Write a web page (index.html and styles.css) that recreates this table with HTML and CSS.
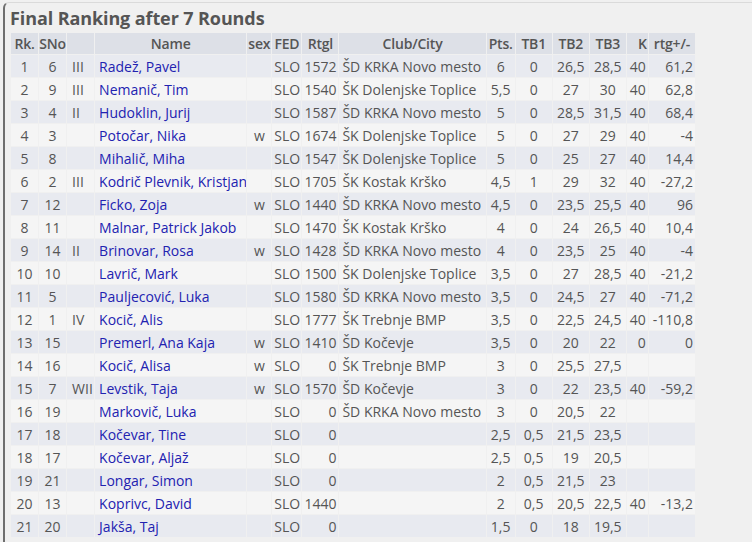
FILE: index.html
```html
<!DOCTYPE html>
<html>
<head>
<meta charset="utf-8">
<link rel="stylesheet" href="styles.css">
</head>
<body>
<div class="frame">
  <h1 class="title">Final Ranking after 7 Rounds</h1>
  <table class="rank">
    <colgroup>
      <col class="c-rk"><col class="c-sno"><col class="c-tit"><col class="c-name"><col class="c-sex"><col class="c-fed"><col class="c-rtg"><col class="c-club"><col class="c-pts"><col class="c-tb"><col class="c-tb"><col class="c-tb"><col class="c-k"><col class="c-diff">
    </colgroup>
    <thead>
      <tr><th>Rk.</th><th>SNo</th><th></th><th>Name</th><th>sex</th><th>FED</th><th>Rtgl</th><th>Club/City</th><th>Pts.</th><th>TB1</th><th>TB2</th><th>TB3</th><th class="r">K</th><th>rtg+/-</th></tr>
    </thead>
    <tbody>
      <tr><td class="c">1</td><td class="c">6</td><td class="t">III</td><td class="n">Radež, Pavel</td><td class="c"></td><td>SLO</td><td class="r">1572</td><td class="l">ŠD KRKA Novo mesto</td><td class="c">6</td><td class="c">0</td><td class="c">26,5</td><td class="c">28,5</td><td class="r">40</td><td class="r">61,2</td></tr>
      <tr><td class="c">2</td><td class="c">9</td><td class="t">III</td><td class="n">Nemanič, Tim</td><td class="c"></td><td>SLO</td><td class="r">1540</td><td class="l">ŠK Dolenjske Toplice</td><td class="c">5,5</td><td class="c">0</td><td class="c">27</td><td class="c">30</td><td class="r">40</td><td class="r">62,8</td></tr>
      <tr><td class="c">3</td><td class="c">4</td><td class="t">II</td><td class="n">Hudoklin, Jurij</td><td class="c"></td><td>SLO</td><td class="r">1587</td><td class="l">ŠD KRKA Novo mesto</td><td class="c">5</td><td class="c">0</td><td class="c">28,5</td><td class="c">31,5</td><td class="r">40</td><td class="r">68,4</td></tr>
      <tr><td class="c">4</td><td class="c">3</td><td class="t"></td><td class="n">Potočar, Nika</td><td class="c">w</td><td>SLO</td><td class="r">1674</td><td class="l">ŠK Dolenjske Toplice</td><td class="c">5</td><td class="c">0</td><td class="c">27</td><td class="c">29</td><td class="r">40</td><td class="r">-4</td></tr>
      <tr><td class="c">5</td><td class="c">8</td><td class="t"></td><td class="n">Mihalič, Miha</td><td class="c"></td><td>SLO</td><td class="r">1547</td><td class="l">ŠK Dolenjske Toplice</td><td class="c">5</td><td class="c">0</td><td class="c">25</td><td class="c">27</td><td class="r">40</td><td class="r">14,4</td></tr>
      <tr><td class="c">6</td><td class="c">2</td><td class="t">III</td><td class="n">Kodrič Plevnik, Kristjan</td><td class="c"></td><td>SLO</td><td class="r">1705</td><td class="l">ŠK Kostak Krško</td><td class="c">4,5</td><td class="c">1</td><td class="c">29</td><td class="c">32</td><td class="r">40</td><td class="r">-27,2</td></tr>
      <tr><td class="c">7</td><td class="c">12</td><td class="t"></td><td class="n">Ficko, Zoja</td><td class="c">w</td><td>SLO</td><td class="r">1440</td><td class="l">ŠD KRKA Novo mesto</td><td class="c">4,5</td><td class="c">0</td><td class="c">23,5</td><td class="c">25,5</td><td class="r">40</td><td class="r">96</td></tr>
      <tr><td class="c">8</td><td class="c">11</td><td class="t"></td><td class="n">Malnar, Patrick Jakob</td><td class="c"></td><td>SLO</td><td class="r">1470</td><td class="l">ŠK Kostak Krško</td><td class="c">4</td><td class="c">0</td><td class="c">24</td><td class="c">26,5</td><td class="r">40</td><td class="r">10,4</td></tr>
      <tr><td class="c">9</td><td class="c">14</td><td class="t">II</td><td class="n">Brinovar, Rosa</td><td class="c">w</td><td>SLO</td><td class="r">1428</td><td class="l">ŠD KRKA Novo mesto</td><td class="c">4</td><td class="c">0</td><td class="c">23,5</td><td class="c">25</td><td class="r">40</td><td class="r">-4</td></tr>
      <tr><td class="c">10</td><td class="c">10</td><td class="t"></td><td class="n">Lavrič, Mark</td><td class="c"></td><td>SLO</td><td class="r">1500</td><td class="l">ŠK Dolenjske Toplice</td><td class="c">3,5</td><td class="c">0</td><td class="c">27</td><td class="c">28,5</td><td class="r">40</td><td class="r">-21,2</td></tr>
      <tr><td class="c">11</td><td class="c">5</td><td class="t"></td><td class="n">Pauljecović, Luka</td><td class="c"></td><td>SLO</td><td class="r">1580</td><td class="l">ŠD KRKA Novo mesto</td><td class="c">3,5</td><td class="c">0</td><td class="c">24,5</td><td class="c">27</td><td class="r">40</td><td class="r">-71,2</td></tr>
      <tr><td class="c">12</td><td class="c">1</td><td class="t">IV</td><td class="n">Kocič, Alis</td><td class="c"></td><td>SLO</td><td class="r">1777</td><td class="l">ŠK Trebnje BMP</td><td class="c">3,5</td><td class="c">0</td><td class="c">22,5</td><td class="c">24,5</td><td class="r">40</td><td class="r">-110,8</td></tr>
      <tr><td class="c">13</td><td class="c">15</td><td class="t"></td><td class="n">Premerl, Ana Kaja</td><td class="c">w</td><td>SLO</td><td class="r">1410</td><td class="l">ŠD Kočevje</td><td class="c">3,5</td><td class="c">0</td><td class="c">20</td><td class="c">22</td><td class="r">0</td><td class="r">0</td></tr>
      <tr><td class="c">14</td><td class="c">16</td><td class="t"></td><td class="n">Kocič, Alisa</td><td class="c">w</td><td>SLO</td><td class="r">0</td><td class="l">ŠK Trebnje BMP</td><td class="c">3</td><td class="c">0</td><td class="c">25,5</td><td class="c">27,5</td><td class="r"></td><td class="r"></td></tr>
      <tr><td class="c">15</td><td class="c">7</td><td class="t">WII</td><td class="n">Levstik, Taja</td><td class="c">w</td><td>SLO</td><td class="r">1570</td><td class="l">ŠD Kočevje</td><td class="c">3</td><td class="c">0</td><td class="c">22</td><td class="c">23,5</td><td class="r">40</td><td class="r">-59,2</td></tr>
      <tr><td class="c">16</td><td class="c">19</td><td class="t"></td><td class="n">Markovič, Luka</td><td class="c"></td><td>SLO</td><td class="r">0</td><td class="l">ŠD KRKA Novo mesto</td><td class="c">3</td><td class="c">0</td><td class="c">20,5</td><td class="c">22</td><td class="r"></td><td class="r"></td></tr>
      <tr><td class="c">17</td><td class="c">18</td><td class="t"></td><td class="n">Kočevar, Tine</td><td class="c"></td><td>SLO</td><td class="r">0</td><td class="l"></td><td class="c">2,5</td><td class="c">0,5</td><td class="c">21,5</td><td class="c">23,5</td><td class="r"></td><td class="r"></td></tr>
      <tr><td class="c">18</td><td class="c">17</td><td class="t"></td><td class="n">Kočevar, Aljaž</td><td class="c"></td><td>SLO</td><td class="r">0</td><td class="l"></td><td class="c">2,5</td><td class="c">0,5</td><td class="c">19</td><td class="c">20,5</td><td class="r"></td><td class="r"></td></tr>
      <tr><td class="c">19</td><td class="c">21</td><td class="t"></td><td class="n">Longar, Simon</td><td class="c"></td><td>SLO</td><td class="r">0</td><td class="l"></td><td class="c">2</td><td class="c">0,5</td><td class="c">21,5</td><td class="c">23</td><td class="r"></td><td class="r"></td></tr>
      <tr><td class="c">20</td><td class="c">13</td><td class="t"></td><td class="n">Koprivc, David</td><td class="c"></td><td>SLO</td><td class="r">1440</td><td class="l"></td><td class="c">2</td><td class="c">0,5</td><td class="c">20,5</td><td class="c">22,5</td><td class="r">40</td><td class="r">-13,2</td></tr>
      <tr><td class="c">21</td><td class="c">20</td><td class="t"></td><td class="n">Jakša, Taj</td><td class="c"></td><td>SLO</td><td class="r">0</td><td class="l"></td><td class="c">1,5</td><td class="c">0</td><td class="c">18</td><td class="c">19,5</td><td class="r"></td><td class="r"></td></tr>
    </tbody>
  </table>
</div>
</body>
</html>
```
FILE: styles.css
```css
html, body {
  margin: 0;
  padding: 0;
  background: #f0f0f0;
}
body {
  font-family: "Open Sans", "Noto Sans", sans-serif;
  color: #555;
}
.frame {
  margin: 2px 0 0 3px;
  border-left: 2px solid #6e6e6e;
  border-top: 1px solid #dadada;
  border-top-left-radius: 6px;
  padding: 2px 0 0 5px;
  min-height: 560px;
}
.title {
  margin: 0 0 1px 0;
  font-size: 18px;
  font-weight: 700;
  line-height: 26px;
  color: #555;
  letter-spacing: -0.1px;
}
.rank {
  border-collapse: separate;
  border-spacing: 1px;
  table-layout: fixed;
  width: 686px;
  font-size: 14px;
}
.c-rk { width: 27px; }
.c-sno { width: 27px; }
.c-tit { width: 27px; }
.c-name { width: 151px; }
.c-sex { width: 24px; }
.c-fed { width: 29px; }
.c-rtg { width: 36px; }
.c-club { width: 146px; }
.c-pts { width: 28px; }
.c-tb { width: 36px; }
.c-k { width: 21px; }
.c-diff { width: 46px; }
.rank th {
  background: #dde0e7;
  font-weight: 600;
  height: 21px;
  padding: 0;
  text-align: center;
  white-space: nowrap;
  overflow: visible;
  letter-spacing: -0.2px;
}
.rank th.r { text-align: right; padding-right: 1px; }
.rank td {
  height: 22px;
  padding: 0 2px;
  white-space: nowrap;
  overflow: hidden;
}
.rank tbody tr:nth-child(odd) td { background: #e8eaf0; }
.rank tbody tr:nth-child(even) td { background: #f5f5f5; }
.rank td.c { text-align: center; }
.rank td.r { text-align: right; }
.rank td.t { padding-left: 5px; }
.rank td.l { padding-left: 3px; }
.rank td.n { color: #2222b0; padding-left: 4px; }
```
